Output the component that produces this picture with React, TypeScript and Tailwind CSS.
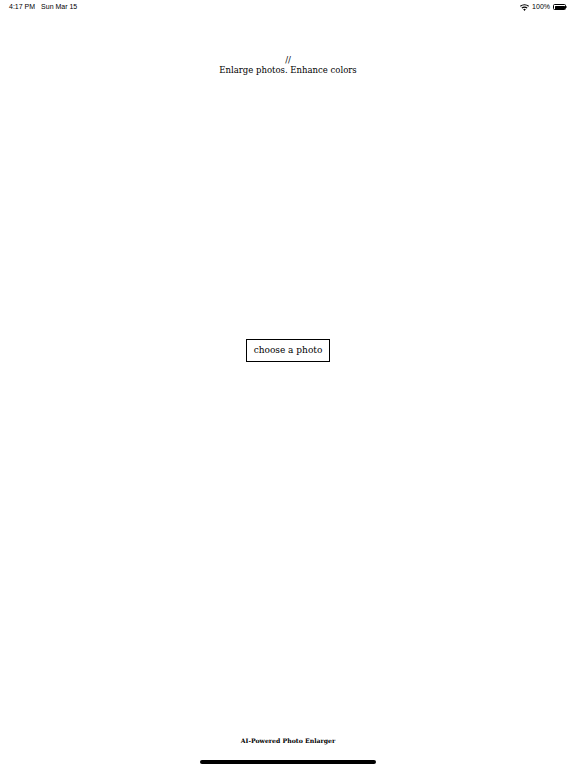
import React from "react";

const slab = { fontFamily: '"DejaVu Serif", "Liberation Serif", serif' };

function StatusBar() {
  return (
    <div className="flex items-center justify-between h-[14px] px-[9px] text-[7px] text-black" style={{ fontFamily: '"Liberation Sans", Arial, sans-serif' }}>
      <div className="flex items-center gap-[6px]">
        <span>4:17 PM</span>
        <span>Sun Mar 15</span>
      </div>
      <div className="flex items-center gap-[3px]">
        <svg width="9" height="7" viewBox="0 0 24 18" fill="black">
          <path d="M12 18l3.5-4.2a5.5 5.5 0 0 0-7 0z" />
          <path d="M12 9.5a9.5 9.5 0 0 1 6.2 2.3l1.9-2.3A12.5 12.5 0 0 0 12 6.5a12.5 12.5 0 0 0-8.1 3l1.9 2.3A9.5 9.5 0 0 1 12 9.5z" />
          <path d="M12 3a16 16 0 0 1 10.3 3.8L24 4.6A19 19 0 0 0 12 0 19 19 0 0 0 0 4.6l1.7 2.2A16 16 0 0 1 12 3z" />
        </svg>
        <span>100%</span>
        <div className="flex items-center">
          <div className="w-[13px] h-[6px] rounded-[1.5px] border border-black p-[0.5px]">
            <div className="w-full h-full bg-black rounded-[0.5px]" />
          </div>
          <div className="w-[1px] h-[2px] bg-black/50" />
        </div>
      </div>
    </div>
  );
}

export default function App() {
  return (
    <div className="w-[576px] h-[768px] bg-white flex flex-col text-black overflow-hidden">
      <StatusBar />
      <div className="flex flex-col items-center mt-[41px] leading-[10px] text-[8.5px]" style={slab}>
        <span>//</span>
        <span>Enlarge photos. Enhance colors</span>
      </div>
      <div className="flex justify-center mt-[264px]">
        <button className="w-[84px] h-[23px] border-[1.5px] border-black text-[9px] flex items-center justify-center bg-white" style={slab}>
          choose a photo
        </button>
      </div>
      <div className="flex-1" />
      <div className="flex justify-center text-[6.2px] font-bold mb-[15px]" style={slab}>
        AI-Powered Photo Enlarger
      </div>
      <div className="flex justify-center mb-[4px]">
        <div className="w-[176px] h-[4px] rounded-full bg-black" />
      </div>
    </div>
  );
}
